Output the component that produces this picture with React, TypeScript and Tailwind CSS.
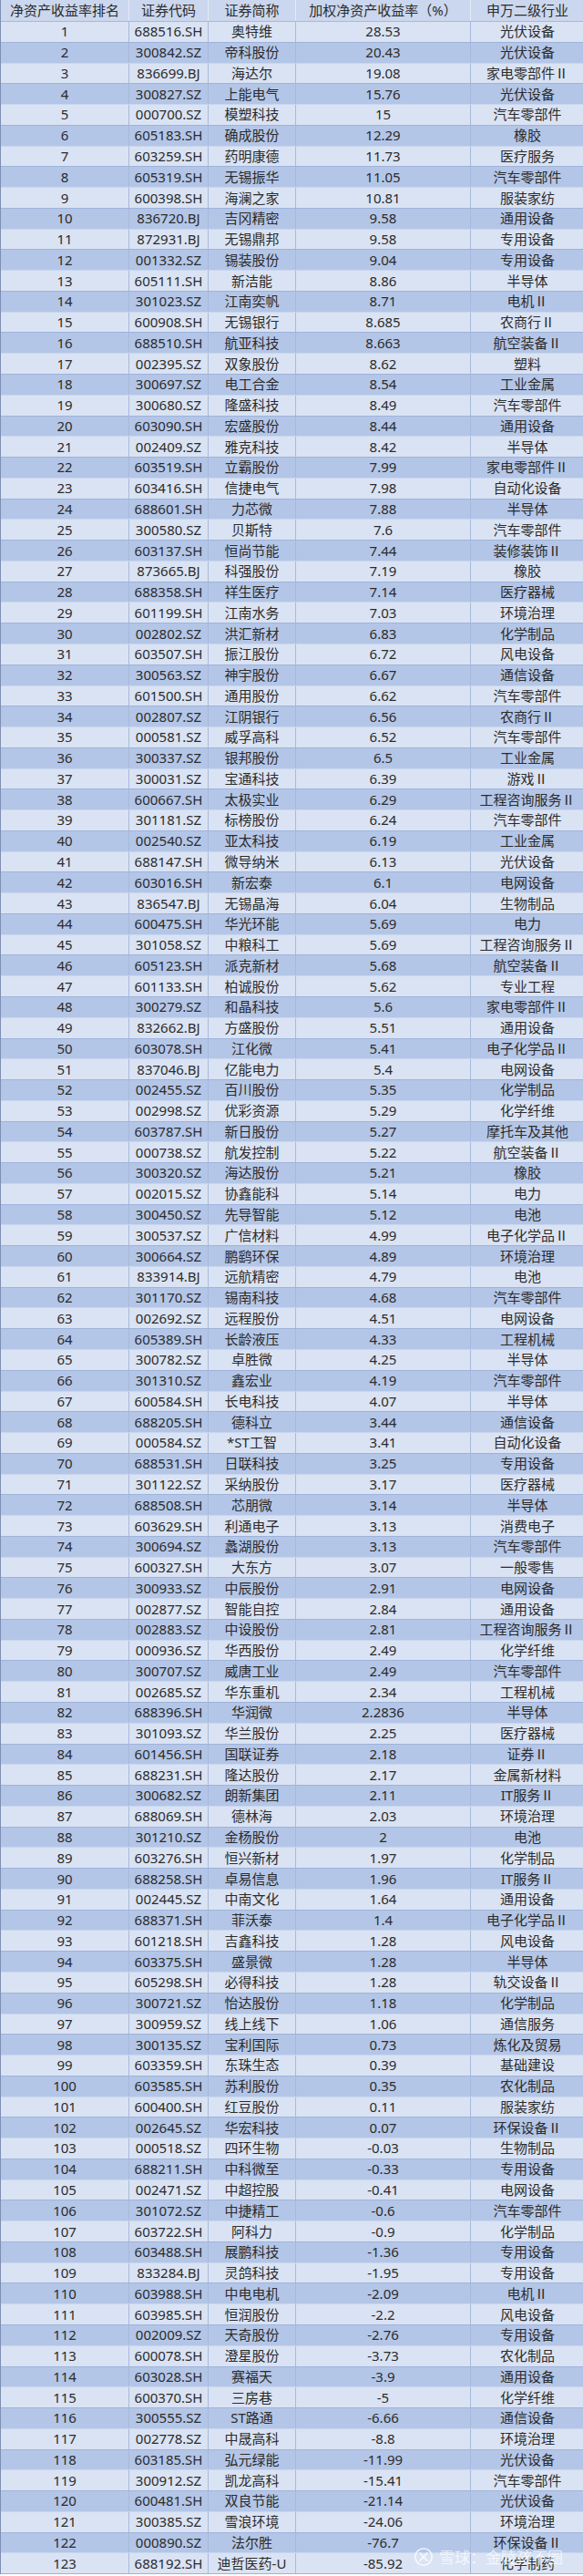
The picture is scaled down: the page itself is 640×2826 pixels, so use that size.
import React from 'react';

const raw = `688516.SH|奥特维|28.53|光伏设备
300842.SZ|帝科股份|20.43|光伏设备
836699.BJ|海达尔|19.08|家电零部件Ⅱ
300827.SZ|上能电气|15.76|光伏设备
000700.SZ|模塑科技|15|汽车零部件
605183.SH|确成股份|12.29|橡胶
603259.SH|药明康德|11.73|医疗服务
605319.SH|无锡振华|11.05|汽车零部件
600398.SH|海澜之家|10.81|服装家纺
836720.BJ|吉冈精密|9.58|通用设备
872931.BJ|无锡鼎邦|9.58|专用设备
001332.SZ|锡装股份|9.04|专用设备
605111.SH|新洁能|8.86|半导体
301023.SZ|江南奕帆|8.71|电机Ⅱ
600908.SH|无锡银行|8.685|农商行Ⅱ
688510.SH|航亚科技|8.663|航空装备Ⅱ
002395.SZ|双象股份|8.62|塑料
300697.SZ|电工合金|8.54|工业金属
300680.SZ|隆盛科技|8.49|汽车零部件
603090.SH|宏盛股份|8.44|通用设备
002409.SZ|雅克科技|8.42|半导体
603519.SH|立霸股份|7.99|家电零部件Ⅱ
603416.SH|信捷电气|7.98|自动化设备
688601.SH|力芯微|7.88|半导体
300580.SZ|贝斯特|7.6|汽车零部件
603137.SH|恒尚节能|7.44|装修装饰Ⅱ
873665.BJ|科强股份|7.19|橡胶
688358.SH|祥生医疗|7.14|医疗器械
601199.SH|江南水务|7.03|环境治理
002802.SZ|洪汇新材|6.83|化学制品
603507.SH|振江股份|6.72|风电设备
300563.SZ|神宇股份|6.67|通信设备
601500.SH|通用股份|6.62|汽车零部件
002807.SZ|江阴银行|6.56|农商行Ⅱ
000581.SZ|威孚高科|6.52|汽车零部件
300337.SZ|银邦股份|6.5|工业金属
300031.SZ|宝通科技|6.39|游戏Ⅱ
600667.SH|太极实业|6.29|工程咨询服务Ⅱ
301181.SZ|标榜股份|6.24|汽车零部件
002540.SZ|亚太科技|6.19|工业金属
688147.SH|微导纳米|6.13|光伏设备
603016.SH|新宏泰|6.1|电网设备
836547.BJ|无锡晶海|6.04|生物制品
600475.SH|华光环能|5.69|电力
301058.SZ|中粮科工|5.69|工程咨询服务Ⅱ
605123.SH|派克新材|5.68|航空装备Ⅱ
601133.SH|柏诚股份|5.62|专业工程
300279.SZ|和晶科技|5.6|家电零部件Ⅱ
832662.BJ|方盛股份|5.51|通用设备
603078.SH|江化微|5.41|电子化学品Ⅱ
837046.BJ|亿能电力|5.4|电网设备
002455.SZ|百川股份|5.35|化学制品
002998.SZ|优彩资源|5.29|化学纤维
603787.SH|新日股份|5.27|摩托车及其他
000738.SZ|航发控制|5.22|航空装备Ⅱ
300320.SZ|海达股份|5.21|橡胶
002015.SZ|协鑫能科|5.14|电力
300450.SZ|先导智能|5.12|电池
300537.SZ|广信材料|4.99|电子化学品Ⅱ
300664.SZ|鹏鹞环保|4.89|环境治理
833914.BJ|远航精密|4.79|电池
301170.SZ|锡南科技|4.68|汽车零部件
002692.SZ|远程股份|4.51|电网设备
605389.SH|长龄液压|4.33|工程机械
300782.SZ|卓胜微|4.25|半导体
301310.SZ|鑫宏业|4.19|汽车零部件
600584.SH|长电科技|4.07|半导体
688205.SH|德科立|3.44|通信设备
000584.SZ|*ST工智|3.41|自动化设备
688531.SH|日联科技|3.25|专用设备
301122.SZ|采纳股份|3.17|医疗器械
688508.SH|芯朋微|3.14|半导体
603629.SH|利通电子|3.13|消费电子
300694.SZ|蠡湖股份|3.13|汽车零部件
600327.SH|大东方|3.07|一般零售
300933.SZ|中辰股份|2.91|电网设备
002877.SZ|智能自控|2.84|通用设备
002883.SZ|中设股份|2.81|工程咨询服务Ⅱ
000936.SZ|华西股份|2.49|化学纤维
300707.SZ|威唐工业|2.49|汽车零部件
002685.SZ|华东重机|2.34|工程机械
688396.SH|华润微|2.2836|半导体
301093.SZ|华兰股份|2.25|医疗器械
601456.SH|国联证券|2.18|证券Ⅱ
688231.SH|隆达股份|2.17|金属新材料
300682.SZ|朗新集团|2.11|IT服务Ⅱ
688069.SH|德林海|2.03|环境治理
301210.SZ|金杨股份|2|电池
603276.SH|恒兴新材|1.97|化学制品
688258.SH|卓易信息|1.96|IT服务Ⅱ
002445.SZ|中南文化|1.64|通用设备
688371.SH|菲沃泰|1.4|电子化学品Ⅱ
601218.SH|吉鑫科技|1.28|风电设备
603375.SH|盛景微|1.28|半导体
605298.SH|必得科技|1.28|轨交设备Ⅱ
300721.SZ|怡达股份|1.18|化学制品
300959.SZ|线上线下|1.06|通信服务
300135.SZ|宝利国际|0.73|炼化及贸易
603359.SH|东珠生态|0.39|基础建设
603585.SH|苏利股份|0.35|农化制品
600400.SH|红豆股份|0.11|服装家纺
002645.SZ|华宏科技|0.07|环保设备Ⅱ
000518.SZ|四环生物|-0.03|生物制品
688211.SH|中科微至|-0.33|专用设备
002471.SZ|中超控股|-0.41|电网设备
301072.SZ|中捷精工|-0.6|汽车零部件
603722.SH|阿科力|-0.9|化学制品
603488.SH|展鹏科技|-1.36|专用设备
833284.BJ|灵鸽科技|-1.95|专用设备
603988.SH|中电电机|-2.09|电机Ⅱ
603985.SH|恒润股份|-2.2|风电设备
002009.SZ|天奇股份|-2.76|专用设备
600078.SH|澄星股份|-3.73|农化制品
603028.SH|赛福天|-3.9|通用设备
600370.SH|三房巷|-5|化学纤维
300555.SZ|ST路通|-6.66|通信设备
002778.SZ|中晟高科|-8.8|环境治理
603185.SH|弘元绿能|-11.99|光伏设备
300912.SZ|凯龙高科|-15.41|汽车零部件
600481.SH|双良节能|-21.14|光伏设备
300385.SZ|雪浪环境|-24.06|环境治理
000890.SZ|法尔胜|-76.7|环保设备Ⅱ
688192.SH|迪哲医药-U|-85.92|化学制药`;

const rows = raw.split('\n').map((line, i) => {
  const [code, name, roe, industry] = line.split('|');
  return { rank: i + 1, code, name, roe, industry };
});

const headers = ['净资产收益率排名', '证券代码', '证券简称', '加权净资产收益率（%）', '申万二级行业'];

const cols = 'grid grid-cols-[141px_87px_96px_192px_124px]';
const cell = 'flex items-center justify-center whitespace-nowrap border-r border-[#a7b9dc] last:border-r-0';

function XueqiuMark() {
  return (
    <svg width="22" height="22" viewBox="0 0 24 24" fill="none" stroke="currentColor" strokeWidth="2">
      <circle cx="12" cy="12" r="10" />
      <path d="M7 7c3 2 5 6 10 10" />
      <path d="M17 7c-3 2-5 6-10 10" />
    </svg>
  );
}

export default function App() {
  return (
    <div
      className="relative w-[640px] bg-[#dae3f3] text-[15px] leading-none text-[#2b2b2b] border-l border-[#7d8fb3]"
      style={{ fontFamily: '"Noto Sans", "Noto Sans CJK SC", sans-serif' }}
    >
      <div className={`${cols} h-[24px] bg-[#cbd7ee] border-b border-[#a7b9dc]`}>
        {headers.map(h => (
          <div key={h} className="flex items-center justify-center whitespace-nowrap border-r border-[#e4ebf7] last:border-r-0">
            {h}
          </div>
        ))}
      </div>

      {rows.map(r => (
        <div
          key={r.rank}
          className={`${cols} h-[22.78px] border-b ${
            r.rank % 2 === 0 ? 'bg-[#b4c6e7] border-[#c9d6ee]' : 'bg-[#dae3f3] border-[#9fb3da]'
          }`}
        >
          <div className={cell}>{r.rank}</div>
          <div className={cell}>{r.code}</div>
          <div className={cell}>{r.name}</div>
          <div className={cell}>{r.roe}</div>
          <div className={cell}>{r.industry}</div>
        </div>
      ))}

      <div className="absolute right-[22px] bottom-[8px] flex items-center gap-1.5 text-[17px] text-white/70">
        <XueqiuMark />
        <span>雪球：金陵孩不圈</span>
      </div>
    </div>
  );
}
